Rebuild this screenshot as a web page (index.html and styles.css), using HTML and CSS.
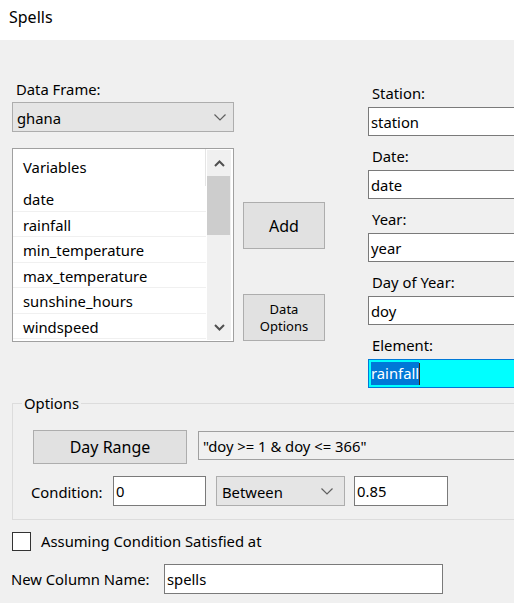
FILE: index.html
```html
<!DOCTYPE html>
<html>
<head>
<meta charset="utf-8">
<title>Spells</title>
<link rel="stylesheet" href="styles.css">
</head>
<body>
<div class="titlebar">Spells</div>
<div class="dialog">
  <div class="top">
    <div class="col-left">
      <div class="lbl df-lbl">Data Frame:</div>
      <div class="combo combo-df">
        <span class="combo-text">ghana</span>
        <svg class="chev" width="12" height="7" viewBox="0 0 12 7"><path d="M0.5 0.5 L6 6 L11.5 0.5" fill="none" stroke="#606060" stroke-width="1.2"/></svg>
      </div>
      <div class="listbox">
        <div class="list-main">
          <div class="list-head">Variables</div>
          <div class="row">date</div>
          <div class="row">rainfall</div>
          <div class="row">min_temperature</div>
          <div class="row">max_temperature</div>
          <div class="row">sunshine_hours</div>
          <div class="row">windspeed</div>
        </div>
        <div class="scrollbar">
          <div class="sb-btn"><svg width="11" height="7" viewBox="0 0 11 7"><path d="M1 6 L5.5 1.5 L10 6" fill="none" stroke="#505050" stroke-width="2"/></svg></div>
          <div class="sb-track"><div class="sb-thumb"></div></div>
          <div class="sb-btn"><svg width="11" height="7" viewBox="0 0 11 7"><path d="M1 1 L5.5 5.5 L10 1" fill="none" stroke="#505050" stroke-width="2"/></svg></div>
        </div>
      </div>
    </div>
    <div class="col-mid">
      <div class="btn btn-add">Add</div>
      <div class="btn btn-data">Data<br>Options</div>
    </div>
    <div class="col-right">
      <div class="field"><div class="lbl">Station:</div><div class="input">station</div></div>
      <div class="field"><div class="lbl">Date:</div><div class="input">date</div></div>
      <div class="field"><div class="lbl">Year:</div><div class="input">year</div></div>
      <div class="field"><div class="lbl">Day of Year:</div><div class="input">doy</div></div>
      <div class="field"><div class="lbl">Element:</div><div class="input input-focus"><span class="sel">rainfall</span><span class="caret"></span></div></div>
    </div>
  </div>

  <fieldset class="options">
    <legend>Options</legend>
    <div class="opt-row1">
      <div class="btn btn-range">Day Range</div>
      <div class="input input-ro">"doy &gt;= 1 &amp; doy &lt;= 366"</div>
    </div>
    <div class="opt-row2">
      <div class="lbl cond-lbl">Condition:</div>
      <div class="input in-small in-a">0</div>
      <div class="combo combo-between">
        <span class="combo-text">Between</span>
        <svg class="chev" width="12" height="7" viewBox="0 0 12 7"><path d="M0.5 0.5 L6 6 L11.5 0.5" fill="none" stroke="#606060" stroke-width="1.2"/></svg>
      </div>
      <div class="input in-small in-b">0.85</div>
    </div>
  </fieldset>

  <div class="check-row">
    <div class="checkbox"></div>
    <div class="lbl">Assuming Condition Satisfied at</div>
  </div>

  <div class="newcol-row">
    <div class="lbl">New Column Name:</div>
    <div class="input in-newcol">spells</div>
  </div>
</div>
</body>
</html>
```

FILE: styles.css
```css
html, body {
  margin: 0;
  padding: 0;
}
body {
  width: 514px;
  height: 603px;
  overflow: hidden;
  background: #f0f0f0;
  font-family: "Noto Sans", "Open Sans", "Liberation Sans", sans-serif;
  font-size: 14.8px;
  color: #000;
}
.titlebar {
  height: 40px;
  background: #fff;
  box-sizing: border-box;
  padding: 6px 0 0 9px;
  font-size: 16px;
  line-height: 22px;
}
.dialog {
  width: 560px;
}
.top {
  display: flex;
  align-items: flex-start;
}
.lbl {
  line-height: 22px;
  white-space: nowrap;
}
.col-left {
  width: 222px;
  margin-left: 12px;
  padding-top: 38px;
}
.df-lbl {
  padding-left: 4px;
  margin-bottom: 2px;
}
.combo {
  box-sizing: border-box;
  height: 30px;
  background: #e5e5e5;
  border: 1px solid #adadad;
  display: flex;
  align-items: center;
  justify-content: space-between;
  padding: 0 7px 0 4px;
}
.combo-text { padding-top: 1px; }
.listbox {
  box-sizing: border-box;
  margin-top: 16px;
  height: 194px;
  border: 1px solid #a0a0a0;
  background: #fff;
  display: flex;
}
.list-main {
  width: 193px;
}
.list-head {
  height: 37px;
  line-height: 37px;
  padding-left: 10px;
  box-sizing: border-box;
  border-right: 1px solid #e5e5e5;
  width: 193px;
}
.row {
  box-sizing: border-box;
  height: 25.5px;
  line-height: 25px;
  padding: 1px 0 0 10px;
  border-bottom: 1px solid #f0f0f0;
}
.scrollbar {
  width: 24px;
  margin: 1px 0 1px 1px;
  background: #f0f0f0;
  display: flex;
  flex-direction: column;
}
.sb-btn {
  height: 26px;
  display: flex;
  align-items: center;
  justify-content: center;
}
.sb-track {
  flex: 1;
}
.sb-thumb {
  height: 59px;
  margin: 0 1px 0 0;
  background: #cdcdcd;
}
.col-mid {
  width: 82px;
  margin-left: 9px;
  padding-top: 162px;
  display: flex;
  flex-direction: column;
}
.btn {
  box-sizing: border-box;
  background: #e1e1e1;
  border: 1px solid #adadad;
  display: flex;
  align-items: center;
  justify-content: center;
  text-align: center;
}
.btn-add {
  height: 47px;
  font-size: 16px;
}
.btn-data {
  height: 47px;
  margin-top: 45px;
  font-size: 13px;
  line-height: 17px;
}
.col-right {
  margin-left: 43px;
  padding-top: 42px;
  width: 170px;
}
.field {
  margin-bottom: 9px;
}
.field:last-child {
  margin-bottom: 0;
}
.field .lbl {
  padding-left: 4px;
  margin-bottom: 3px;
}
.input {
  box-sizing: border-box;
  height: 29px;
  background: #fff;
  border: 1px solid #7a7a7a;
  line-height: 27px;
  padding: 1px 0 0 2px;
  white-space: nowrap;
  overflow: hidden;
}
.input-focus {
  background: #00ffff;
  border-color: #0078d7;
  display: flex;
  align-items: center;
  padding-top: 0;
}
.sel {
  background: #0078d7;
  color: #fff;
  line-height: 23px;
}
.caret {
  width: 1px;
  height: 22px;
  background: #3a2a10;
}
.options {
  margin: 5px 0 0 12px;
  padding: 17px 0 13px 20px;
  border: 1px solid #dcdcdc;
  width: 520px;
  box-sizing: border-box;
}
.options legend {
  margin-left: -11px;
  padding: 0 2px;
  line-height: 20px;
}
.opt-row1 {
  display: flex;
  align-items: flex-start;
}
.btn-range {
  width: 154px;
  height: 34px;
  font-size: 16px;
}
.input-ro {
  flex: 1;
  margin: 1px 0 0 11px;
  background: #f0f0f0;
  border-color: #a0a0a0;
  padding-left: 4px;
}
.opt-row2 {
  display: flex;
  align-items: center;
  margin-top: 12px;
}
.cond-lbl {
  width: 82px;
  margin-left: -2px;
  padding-top: 1px;
}
.in-small {
  height: 30px;
  line-height: 27px;
}
.in-a {
  width: 93px;
}
.combo-between {
  width: 129px;
  margin-left: 10px;
  padding-left: 5px;
  padding-right: 11px;
}
.in-b {
  width: 94px;
  margin-left: 9px;
}
.check-row {
  display: flex;
  align-items: center;
  margin: 10px 0 0 12px;
}
.checkbox {
  box-sizing: border-box;
  width: 19px;
  height: 19px;
  border: 1px solid #333;
  background: #fff;
  margin-right: 10px;
}
.newcol-row {
  display: flex;
  align-items: center;
  margin: 12px 0 0 11px;
}
.newcol-row .lbl {
  width: 153px;
}
.in-newcol {
  width: 279px;
  height: 30px;
  line-height: 27px;
}
```
